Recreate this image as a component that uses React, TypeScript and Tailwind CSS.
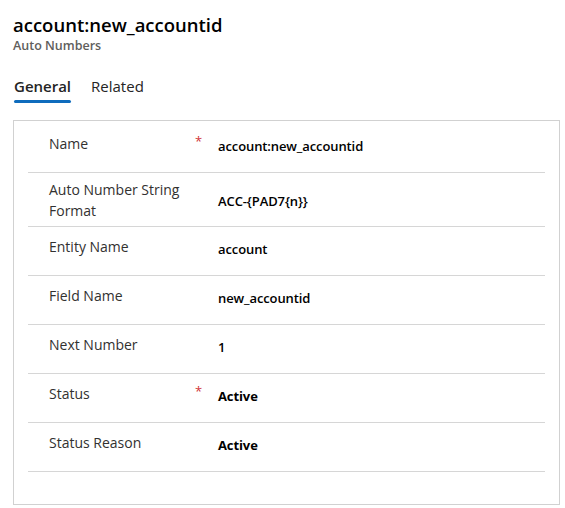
import React from 'react';

type Row = {
    label: string;
    value: string;
    required?: boolean;
    tall?: boolean;
    bold?: boolean;
};

const rows: Row[] = [
    { label: 'Name', value: 'account:new_accountid', required: true },
    { label: 'Auto Number String Format', value: 'ACC-{PAD7{n}}', tall: true },
    { label: 'Entity Name', value: 'account' },
    { label: 'Field Name', value: 'new_accountid' },
    { label: 'Next Number', value: '1' },
    { label: 'Status', value: 'Active', required: true, bold: true },
    { label: 'Status Reason', value: 'Active', bold: true },
];

function FieldRow({ row }: { row: Row }) {
    return (
        <div className={`flex border-b border-[#d6d6d6] ${row.tall ? 'h-[54px] items-center' : 'h-[49px] items-start'}`}>
            <div className={`w-[167px] pl-[21px] pr-[4px] text-[14px] leading-[21px] text-[#323130] ${row.tall ? '' : 'pt-[9px]'}`}>
                {row.label}
            </div>
            <div className={`w-[23px] text-[13px] leading-[21px] text-[#d13438] ${row.tall ? '' : 'pt-[7px]'}`}>
                {row.required ? '*' : ''}
            </div>
            <div
                className={`flex-1 text-[13px] tracking-[-0.1px] leading-[20px] text-black ${row.bold ? 'font-bold' : 'font-semibold'} ${row.tall ? 'pt-[2px]' : 'pt-[12px]'}`}
            >
                {row.value}
            </div>
        </div>
    );
}

export default function App() {
    return (
        <div className="w-[565px] h-[508px] bg-white overflow-hidden font-['Open_Sans','Noto_Sans',sans-serif]">
            {/* Header */}
            <div className="pl-[13px] pt-[12px]">
                <h1 className="text-[18.5px] leading-[26px] font-semibold text-black">account:new_accountid</h1>
                <p className="text-[12.5px] leading-[16px] font-semibold text-[#605e5c]">Auto Numbers</p>
            </div>

            {/* Tabs */}
            <div className="flex gap-[20px] pl-[14px] mt-[22px]">
                <div className="flex flex-col">
                    <span className="text-[15px] leading-[20px] font-semibold text-[#242424]">General</span>
                    <span className="mt-[4px] h-[3px] rounded-full bg-[#0f6cbd]" />
                </div>
                <span className="text-[15px] leading-[20px] text-[#242424]">Related</span>
            </div>

            {/* Card */}
            <div className="ml-[13px] mt-[17px] w-[547px] h-[385px] border border-[#d1d1d1] pt-[3px]">
                <div className="mx-[14px]">
                    {rows.map((r) => (
                        <FieldRow key={r.label} row={r} />
                    ))}
                </div>
            </div>
        </div>
    );
}
